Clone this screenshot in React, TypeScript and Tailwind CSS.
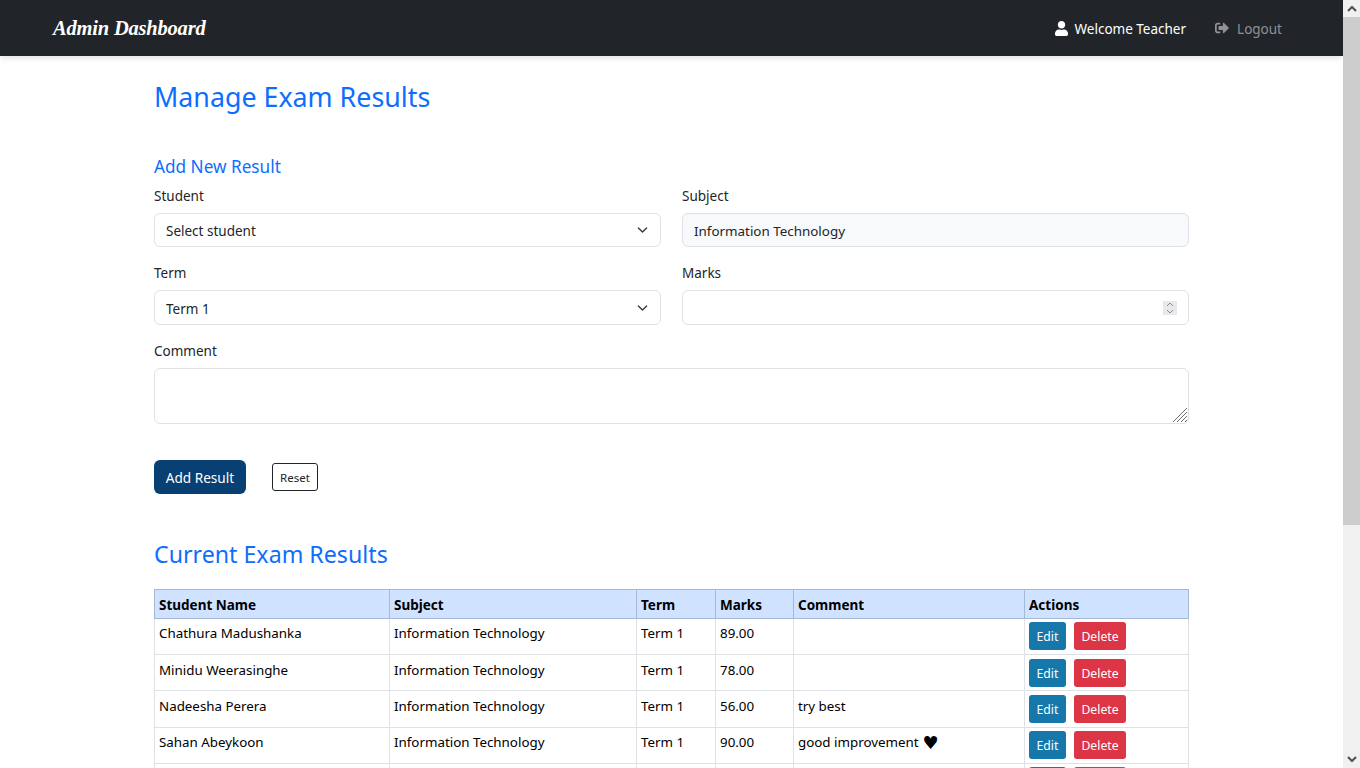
import { FaUser, FaSignOutAlt } from "react-icons/fa";

const rows = [
  { name: "Chathura Madushanka", marks: "89.00", comment: "", h: "h-[36px]", pb: "pb-[7px]", pt: "pt-[3px]" },
  { name: "Minidu Weerasinghe", marks: "78.00", comment: "", h: "h-[36px]", pb: "pb-[4px]", pt: "pt-[4px]" },
  { name: "Nadeesha Perera", marks: "56.00", comment: "try best", h: "h-[37px]", pb: "pb-[5px]", pt: "pt-[4px]" },
  { name: "Sahan Abeykoon", marks: "90.00", comment: "good improvement", h: "h-[36px]", pb: "pb-[7px]", pt: "pt-[3px]" },
];

const font = { fontFamily: '"Noto Sans", sans-serif' };

function Chevron() {
  return (
    <svg className="pointer-events-none absolute right-[13px] top-1/2 -translate-y-1/2" width="11" height="11" viewBox="0 0 16 16" fill="none" stroke="#343a40" strokeWidth="2" strokeLinecap="round" strokeLinejoin="round">
      <path d="m2 5 6 6 6-6" />
    </svg>
  );
}

export default function App() {
  return (
    <div className="flex h-screen w-full overflow-hidden bg-white text-[13.5px] text-[#212529]" style={font}>
      <div className="flex min-w-0 flex-1 flex-col overflow-hidden">
        <nav className="flex h-[56px] shrink-0 items-center justify-between bg-[#212529] pl-[53px] pr-[61px] shadow-[0_2px_6px_rgba(0,0,0,0.12)]">
          <span className="text-[20.5px] font-bold italic tracking-[-0.2px] text-white" style={{ fontFamily: '"Liberation Serif", serif' }}>Admin Dashboard</span>
          <div className="flex items-center gap-[29px]">
            <span className="flex items-center gap-[7px] text-white"><FaUser className="h-[15px] w-[13px]" /><span className="pt-[2px]">Welcome Teacher</span></span>
            <span className="flex items-center gap-[8px] text-[#8f9194]"><FaSignOutAlt className="h-[14px] w-[14px]" /><span className="pt-[2px]">Logout</span></span>
          </div>
        </nav>
        <main className="flex-1 pl-[154px] pr-[154px]">
          <h1 className="mt-[22px] text-[26.8px] leading-[38px] text-[#0d6efd]">Manage Exam Results</h1>
          <h2 className="mt-[38px] text-[17.2px] leading-[26px] text-[#0d6efd]">Add New Result</h2>
          <form className="mt-[5px]">
            <div className="grid grid-cols-2 gap-x-[21px]">
              <div>
                <label className="mb-[6px] block leading-[22px]">Student</label>
                <div className="relative">
                  <select className="h-[34px] w-full appearance-none rounded-[6px] border border-[#dee2e6] bg-white px-[11px] pt-[2px] text-[#212529]">
                    <option>Select student</option>
                  </select>
                  <Chevron />
                </div>
              </div>
              <div>
                <label className="mb-[6px] block leading-[22px]">Subject</label>
                <input readOnly value="Information Technology" className="h-[34px] w-full rounded-[6px] border border-[#dee2e6] bg-[#f8f9fa] px-[11px] pt-[2px] text-[13.4px]" />
              </div>
              <div className="mt-[15px]">
                <label className="mb-[6px] block leading-[22px]">Term</label>
                <div className="relative">
                  <select className="h-[35px] w-full appearance-none rounded-[6px] border border-[#dee2e6] bg-white px-[11px] pt-[3px] text-[#212529]">
                    <option>Term 1</option>
                  </select>
                  <Chevron />
                </div>
              </div>
              <div className="mt-[15px]">
                <label className="mb-[6px] block leading-[22px]">Marks</label>
                <div className="relative">
                  <input className="h-[35px] w-full rounded-[6px] border border-[#dee2e6] bg-white px-[11px]" />
                  <span className="absolute right-[12px] top-[11px] flex h-[14px] w-[14px] items-center justify-center bg-[#e9e9ed]">
                    <svg width="8" height="12" viewBox="0 0 8 12" fill="none" stroke="#8a8a8a" strokeWidth="1">
                      <path d="m1 4 3-3 3 3M1 8l3 3 3-3" />
                    </svg>
                  </span>
                </div>
              </div>
            </div>
            <div className="mt-[15px]">
              <label className="mb-[6px] block leading-[22px]">Comment</label>
              <div className="relative">
                <textarea className="block h-[56px] w-full resize-none rounded-[6px] border border-[#dee2e6] px-[11px] py-[6px]" />
                <svg className="pointer-events-none absolute bottom-[2px] right-[2px]" width="14" height="14" viewBox="0 0 14 14" fill="none" stroke="#6e6e6e" strokeWidth="1">
                  <path d="M0 14 14 0M4 14 14 4M8 14l6-6M12 14l2-2" />
                </svg>
              </div>
            </div>
            <div className="mt-[36px] flex items-center gap-[26px]">
              <button type="button" className="h-[34px] w-[92px] rounded-[6px] bg-[#084073] pt-[2px] text-[13.6px] text-white">Add Result</button>
              <button type="button" className="h-[28px] w-[46px] rounded-[3px] border border-[#212529] bg-white pt-[1px] text-[11.5px] text-[#212529]">Reset</button>
            </div>
          </form>
          <h2 className="mt-[42px] text-[23.2px] leading-[36px] text-[#0d6efd]">Current Exam Results</h2>
          <table className="mt-[17px] w-[1034px] table-fixed border-collapse text-[13.35px] text-black">
            <colgroup>
              <col className="w-[235px]" />
              <col className="w-[247px]" />
              <col className="w-[79px]" />
              <col className="w-[78px]" />
              <col className="w-[231px]" />
              <col className="w-[164px]" />
            </colgroup>
            <thead>
              <tr className="h-[29px] bg-[#cfe2ff] text-left">
                {["Student Name", "Subject", "Term", "Marks", "Comment", "Actions"].map((h) => (
                  <th key={h} className="border border-[#a9b8d2] px-[4px] pb-0 pt-[3px] text-[13.5px] font-bold">{h}</th>
                ))}
              </tr>
            </thead>
            <tbody>
              {rows.map((r) => (
                <tr key={r.name} className={r.h}>
                  <td className={`border border-[#dee2e6] px-[4px] ${r.pb}`}>{r.name}</td>
                  <td className={`border border-[#dee2e6] px-[4px] ${r.pb}`}>Information Technology</td>
                  <td className={`border border-[#dee2e6] px-[4px] ${r.pb}`}>Term 1</td>
                  <td className={`border border-[#dee2e6] px-[4px] ${r.pb}`}>{r.marks}</td>
                  <td className={`border border-[#dee2e6] px-[4px] ${r.pb}`}>
                    {r.comment}
                    {r.comment === "good improvement" && <span className="ml-[4px] align-[-2px] text-[18px] leading-none" style={{ fontFamily: '"DejaVu Sans", sans-serif' }}>♥</span>}
                  </td>
                  <td className={`border border-[#dee2e6] px-[4px] pb-0 align-top ${r.pt}`}>
                    <div className="flex gap-[8px]">
                      <button type="button" className="h-[28px] w-[37px] rounded-[3px] bg-[#1577aa] pt-[3px] text-[12.2px] text-white">Edit</button>
                      <button type="button" className="h-[28px] w-[52px] rounded-[3px] bg-[#dc3545] pt-[3px] text-[12.2px] text-white">Delete</button>
                    </div>
                  </td>
                </tr>
              ))}
              <tr className="h-[36px]">
                <td className="border border-[#dee2e6]" />
                <td className="border border-[#dee2e6]" />
                <td className="border border-[#dee2e6]" />
                <td className="border border-[#dee2e6]" />
                <td className="border border-[#dee2e6]" />
                <td className="border border-[#dee2e6] px-[4px] pb-0 pt-[3px] align-top">
                  <div className="flex gap-[8px]">
                    <div className="h-[28px] w-[37px] rounded-[3px] bg-[#1577aa]" />
                    <div className="h-[28px] w-[52px] rounded-[3px] bg-[#dc3545]" />
                  </div>
                </td>
              </tr>
            </tbody>
          </table>
        </main>
      </div>
      <div className="flex w-[17px] shrink-0 flex-col bg-[#f0f0f0]">
        <div className="flex h-[17px] items-center justify-center">
          <svg width="10" height="7" viewBox="0 0 10 7" fill="none" stroke="#505050" strokeWidth="2"><path d="m1 6 4-4 4 4" /></svg>
        </div>
        <div className="h-[508px] bg-[#cdcdcd]" />
        <div className="flex-1" />
        <div className="flex h-[17px] items-center justify-center">
          <svg width="10" height="7" viewBox="0 0 10 7" fill="none" stroke="#505050" strokeWidth="2"><path d="m1 1 4 4 4-4" /></svg>
        </div>
      </div>
    </div>
  );
}
